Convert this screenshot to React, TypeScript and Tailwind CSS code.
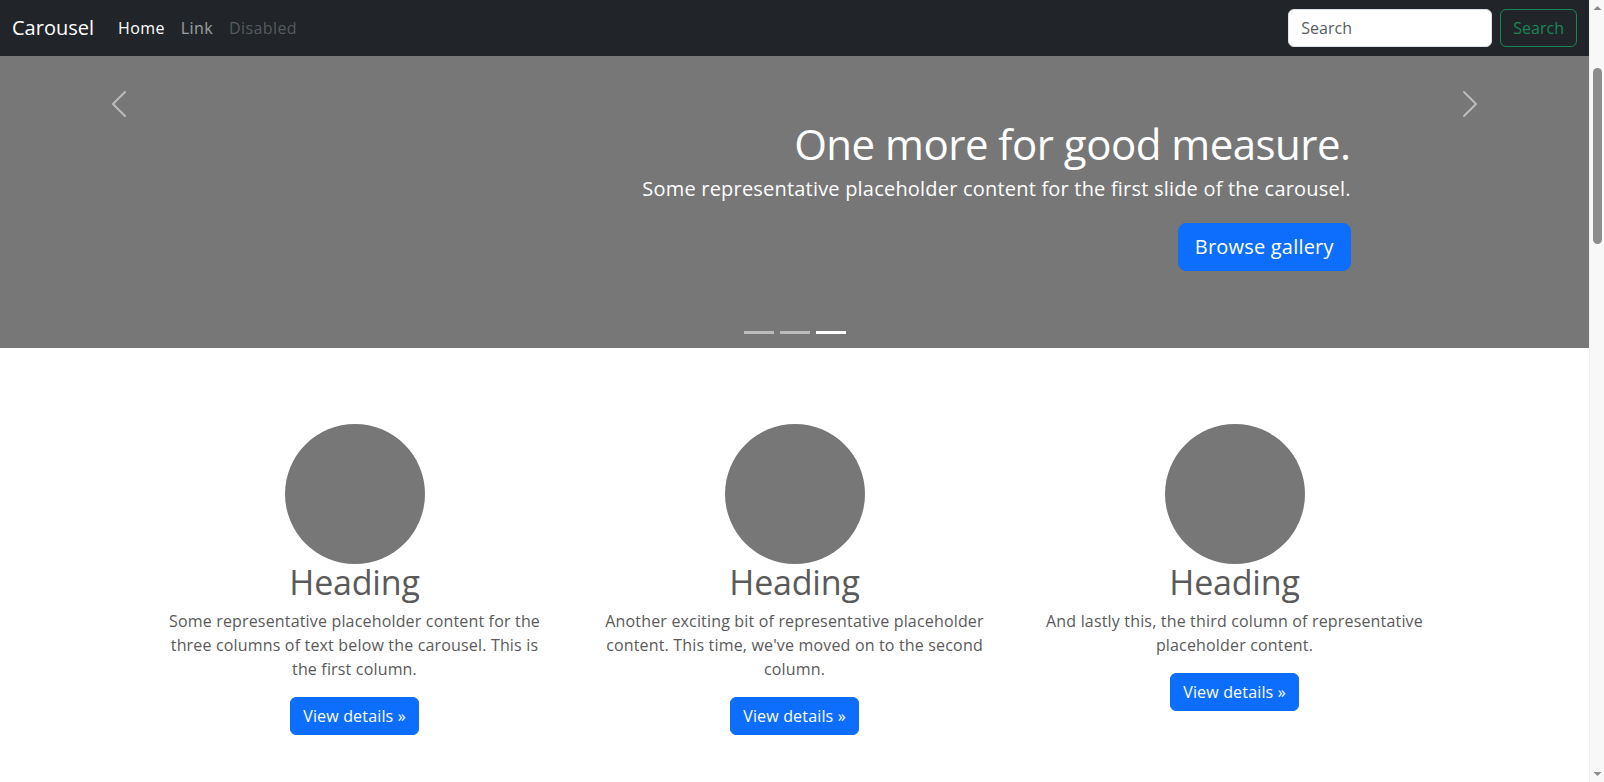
import React from "react";

function ChevronLeft() {
  return (
    <svg width="32" height="32" viewBox="0 0 16 16" fill="#fff" aria-hidden="true">
      <path d="M11.354 1.646a.5.5 0 0 1 0 .708L5.707 8l5.647 5.646a.5.5 0 0 1-.708.708l-6-6a.5.5 0 0 1 0-.708l6-6a.5.5 0 0 1 .708 0z" />
    </svg>
  );
}

function ChevronRight() {
  return (
    <svg width="32" height="32" viewBox="0 0 16 16" fill="#fff" aria-hidden="true">
      <path d="M4.646 1.646a.5.5 0 0 1 .708 0l6 6a.5.5 0 0 1 0 .708l-6 6a.5.5 0 0 1-.708-.708L10.293 8 4.646 2.354a.5.5 0 0 1 0-.708z" />
    </svg>
  );
}

function Scrollbar() {
  return (
    <div className="w-[15px] h-full bg-[#f8f8f8] border-l border-[#efefef] flex flex-col items-center">
      <svg width="15" height="17" viewBox="0 0 15 17" aria-hidden="true">
        <path d="M3.5 10 L7.5 6 L11.5 10 Z" fill="#8b8b8b" />
      </svg>
      <div className="mt-[51px] w-[9px] h-[176px] rounded-full bg-[#8d8d8d]" />
      <div className="flex-1" />
      <svg width="15" height="17" viewBox="0 0 15 17" aria-hidden="true">
        <path d="M3.5 7 L7.5 11 L11.5 7 Z" fill="#8b8b8b" />
      </svg>
    </div>
  );
}

const columns = [
  "Some representative placeholder content for the three columns of text below the carousel. This is the first column.",
  "Another exciting bit of representative placeholder content. This time, we've moved on to the second column.",
  "And lastly this, the third column of representative placeholder content.",
];

export default function App() {
  return (
    <div className="h-screen flex overflow-hidden bg-white font-['Open_Sans',sans-serif] text-[#5a5a5a] text-base leading-6">
      <main className="flex-1 min-w-0 overflow-hidden">
        <nav className="h-[56px] bg-[#212529] flex items-center justify-between px-3">
          <div className="flex items-center">
            <a className="text-white text-[20px] leading-[30px] mr-4 cursor-pointer">Carousel</a>
            <a className="px-2 tracking-[0.4px] text-white cursor-pointer">Home</a>
            <a className="px-2 tracking-[0.4px] text-white/55 cursor-pointer">Link</a>
            <a className="px-2 tracking-[0.4px] text-white/25">Disabled</a>
          </div>
          <form className="flex items-center" onSubmit={(e) => e.preventDefault()}>
            <input
              type="search"
              placeholder="Search"
              className="w-[204px] h-[38px] rounded-md bg-white border border-[#dee2e6] px-3 text-base text-[#212529] placeholder:text-[#595c5f] mr-2 outline-none"
            />
            <button
              type="submit"
              className="h-[38px] px-3 rounded-md border border-[#198754] text-[#198754] text-base bg-transparent"
            >
              Search
            </button>
          </form>
        </nav>

        <div className="relative h-[292px] bg-[#777] overflow-hidden">
          <button className="absolute left-0 top-0 bottom-0 w-[15%] flex justify-center items-start pt-[32px] opacity-50">
            <ChevronLeft />
          </button>
          <button className="absolute right-0 top-0 bottom-0 w-[15%] flex justify-center items-start pt-[32px] opacity-50">
            <ChevronRight />
          </button>
          <div className="absolute left-[15%] right-[15%] bottom-[77px] text-right text-white">
            <h1 className="text-[42px] tracking-[-0.5px] leading-[1.2] font-normal mb-[5px]">One more for good measure.</h1>
            <p className="text-[20px] tracking-[0.2px] leading-[30px] mb-[19px]">
              Some representative placeholder content for the first slide of the carousel.
            </p>
            <a className="inline-block bg-[#0d6efd] border border-[#0d6efd] text-white rounded-lg px-4 py-2 text-[20px] tracking-[0.2px] leading-[30px] cursor-pointer">
              Browse gallery
            </a>
          </div>
          <div className="absolute left-0 right-0 bottom-[14px] flex justify-center gap-[6px]">
            <span className="block w-[30px] h-[3px] bg-white opacity-50" />
            <span className="block w-[30px] h-[3px] bg-white opacity-50" />
            <span className="block w-[30px] h-[3px] bg-white" />
          </div>
        </div>

        <div className="w-[1320px] mx-auto pt-[76px]">
          <div className="grid grid-cols-3">
            {columns.map((text, i) => (
              <div key={i} className="flex flex-col items-center text-center px-3 mb-6">
                <div className="w-[140px] h-[140px] rounded-full bg-[#777]" />
                <h2 className="text-[34px] tracking-[-0.2px] leading-[1.2] font-normal mt-[-2px] mb-[6px]">Heading</h2>
                <p className="mx-3 mb-4 tracking-[0.17px]">{text}</p>
                <a className="inline-block bg-[#0d6efd] border border-[#0d6efd] text-white rounded-md px-3 py-[6px] leading-6 tracking-[0.17px] cursor-pointer">
                  View details »
                </a>
              </div>
            ))}
          </div>
        </div>
      </main>
      <Scrollbar />
    </div>
  );
}
